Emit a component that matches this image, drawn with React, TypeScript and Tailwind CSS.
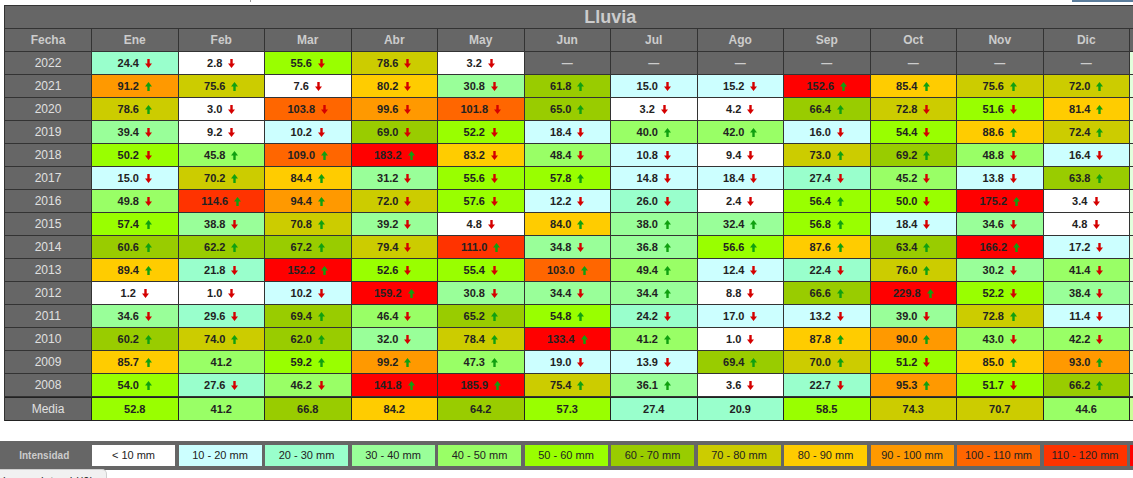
const months = ['Ene', 'Feb', 'Mar', 'Abr', 'May', 'Jun', 'Jul', 'Ago', 'Sep', 'Oct', 'Nov', 'Dic']

// value + arrow: "u" sube, "d" baja, nothing = igual a la media
const rows: [string, string[]][] = [
  ['2022', ['24.4d', '2.8d', '55.6d', '78.6d', '3.2d', '-', '-', '-', '-', '-', '-', '-']],
  ['2021', ['91.2u', '75.6u', '7.6d', '80.2d', '30.8d', '61.8u', '15.0d', '15.2d', '152.6u', '85.4u', '75.6u', '72.0u']],
  ['2020', ['78.6u', '3.0d', '103.8d', '99.6d', '101.8d', '65.0u', '3.2d', '4.2d', '66.4u', '72.8d', '51.6d', '81.4u']],
  ['2019', ['39.4d', '9.2d', '10.2d', '69.0d', '52.2d', '18.4d', '40.0u', '42.0u', '16.0d', '54.4d', '88.6u', '72.4u']],
  ['2018', ['50.2d', '45.8u', '109.0u', '183.2u', '83.2d', '48.4d', '10.8d', '9.4d', '73.0u', '69.2u', '48.8d', '16.4d']],
  ['2017', ['15.0d', '70.2u', '84.4u', '31.2d', '55.6d', '57.8u', '14.8d', '18.4d', '27.4d', '45.2d', '13.8d', '63.8u']],
  ['2016', ['49.8d', '114.6u', '94.4u', '72.0d', '57.6d', '12.2d', '26.0d', '2.4d', '56.4u', '50.0d', '175.2u', '3.4d']],
  ['2015', ['57.4u', '38.8d', '70.8u', '39.2d', '4.8d', '84.0u', '38.0u', '32.4u', '56.8u', '18.4d', '34.6d', '4.8d']],
  ['2014', ['60.6u', '62.2u', '67.2u', '79.4d', '111.0u', '34.8d', '36.8u', '56.6u', '87.6u', '63.4u', '166.2u', '17.2d']],
  ['2013', ['89.4u', '21.8d', '152.2u', '52.6d', '55.4d', '103.0u', '49.4u', '12.4d', '22.4d', '76.0u', '30.2d', '41.4d']],
  ['2012', ['1.2d', '1.0d', '10.2d', '159.2u', '30.8d', '34.4d', '34.4u', '8.8d', '66.6u', '229.8u', '52.2d', '38.4d']],
  ['2011', ['34.6d', '29.6d', '69.4u', '46.4d', '65.2u', '54.8u', '24.2d', '17.0d', '13.2d', '39.0d', '72.8u', '11.4d']],
  ['2010', ['60.2u', '74.0u', '62.0u', '32.0d', '78.4u', '133.4u', '41.2u', '1.0d', '87.8u', '90.0u', '43.0d', '42.2d']],
  ['2009', ['85.7u', '41.2', '59.2u', '99.2u', '47.3u', '19.0d', '13.9d', '69.4u', '70.0u', '51.2d', '85.0u', '93.0u']],
  ['2008', ['54.0u', '27.6d', '46.2d', '141.8u', '185.9u', '75.4u', '36.1u', '3.6d', '22.7d', '95.3u', '51.7d', '66.2u']],
]

const media = ['52.8', '41.2', '66.8', '84.2', '64.2', '57.3', '27.4', '20.9', '58.5', '74.3', '70.7', '44.6']

const scale = [
  { label: '< 10 mm', bg: 'bg-white' },
  { label: '10 - 20 mm', bg: 'bg-[#ccffff]' },
  { label: '20 - 30 mm', bg: 'bg-[#99ffcc]' },
  { label: '30 - 40 mm', bg: 'bg-[#99ff99]' },
  { label: '40 - 50 mm', bg: 'bg-[#99ff66]' },
  { label: '50 - 60 mm', bg: 'bg-[#99ff00]' },
  { label: '60 - 70 mm', bg: 'bg-[#99cc00]' },
  { label: '70 - 80 mm', bg: 'bg-[#cccc00]' },
  { label: '80 - 90 mm', bg: 'bg-[#ffcc00]' },
  { label: '90 - 100 mm', bg: 'bg-[#ff9900]' },
  { label: '100 - 110 mm', bg: 'bg-[#ff6600]' },
  { label: '110 - 120 mm', bg: 'bg-[#ff3300]' },
  { label: '> 120 mm', bg: 'bg-[#ff0000]' },
]

function bgFor(v: number) {
  const i = Math.min(Math.floor(v / 10), 12)
  return scale[i].bg
}

function Arrow({ up }: { up: boolean }) {
  return (
    <svg width="7" height="9" viewBox="0 0 7 9" className={up ? '' : 'rotate-180'}>
      <polygon points="3.5,0 7,4.5 4.7,4.5 4.7,9 2.3,9 2.3,4.5 0,4.5" fill={up ? '#10a010' : '#d40000'} />
    </svg>
  )
}

const gray = 'bg-[#666666] border-r border-b border-[#333333] h-[23px] flex items-center justify-center'

function DataCell({ raw }: { raw: string }) {
  if (raw === '-') {
    return <div className={`${gray} text-[11px] font-bold text-[#cccccc]`}>—</div>
  }
  const dir = raw.slice(-1)
  const value = dir === 'u' || dir === 'd' ? raw.slice(0, -1) : raw
  return (
    <div
      className={`${bgFor(parseFloat(value))} border-r border-b border-[#333333] h-[23px] flex items-center justify-center gap-[6px] text-[11px] font-bold text-[#222222]`}
    >
      <span>{value}</span>
      {dir === 'u' && <Arrow up />}
      {dir === 'd' && <Arrow up={false} />}
    </div>
  )
}

export default function App() {
  return (
    <div className="relative w-[1133px] h-[478px] overflow-hidden bg-white font-['Liberation_Sans',Arial,sans-serif]">
      <div className="flex h-[5px]">
        <div className="ml-[250px] w-px h-[2px] bg-[#999999]" />
        <div className="ml-auto w-[61px] h-[2px] bg-[#5b7d9c]" />
      </div>

      <div className="ml-[4px] w-max grid grid-cols-[87px_repeat(13,86.5px)] border-l border-t border-[#333333]">
        <div className={`${gray} col-span-full text-[18px] font-bold text-[#cccccc]`}>Lluvia</div>

        <div className={`${gray} text-[12px] font-bold text-[#cccccc]`}>Fecha</div>
        {months.map((m) => (
          <div key={m} className={`${gray} text-[12px] font-bold text-[#cccccc]`}>
            {m}
          </div>
        ))}
        <div className={gray} />

        {rows.map(([year, values]) => (
          <div key={year} className="contents">
            <div className={`${gray} text-[12px] text-[#e0e0e0]`}>{year}</div>
            {values.map((raw, i) => (
              <DataCell key={i} raw={raw} />
            ))}
            <div className="bg-[#e2ffdc] border-r border-b border-[#333333] h-[23px]" />
          </div>
        ))}

        <div className="bg-[#666666] border-r border-t border-b border-[#222222] h-[24px] flex items-center justify-center text-[12px] text-[#e0e0e0]">
          Media
        </div>
        {media.map((v, i) => (
          <div
            key={i}
            className={`${bgFor(parseFloat(v))} border-r border-t border-b border-[#222222] h-[24px] flex items-center justify-center text-[11px] font-bold text-[#222222]`}
          >
            {v}
          </div>
        ))}
        <div className="bg-[#ccff99] border-r border-t border-b border-[#222222] h-[24px]" />
      </div>

      <div className="mt-[20px] w-max flex gap-[3.5px] py-[4px] bg-[#666666]">
        <div className="w-[88.5px] h-[21px] flex items-center justify-center text-[10px] font-bold text-[#cccccc]">
          Intensidad
        </div>
        {scale.map((s) => (
          <div key={s.label} className={`${s.bg} w-[83px] h-[21px] flex items-center justify-center text-[11px] text-[#222222]`}>
            {s.label}
          </div>
        ))}
      </div>

      <div className="absolute left-0 top-[469px] w-[107px] h-[22px] bg-[#f1f1f1] border-t border-r border-[#cfcfcf] rounded-tr-[5px] pl-[3px] pt-[5px] text-[12px] leading-[14px] text-[#333333] whitespace-nowrap overflow-hidden">
        javascript:void(0)
      </div>
    </div>
  )
}
